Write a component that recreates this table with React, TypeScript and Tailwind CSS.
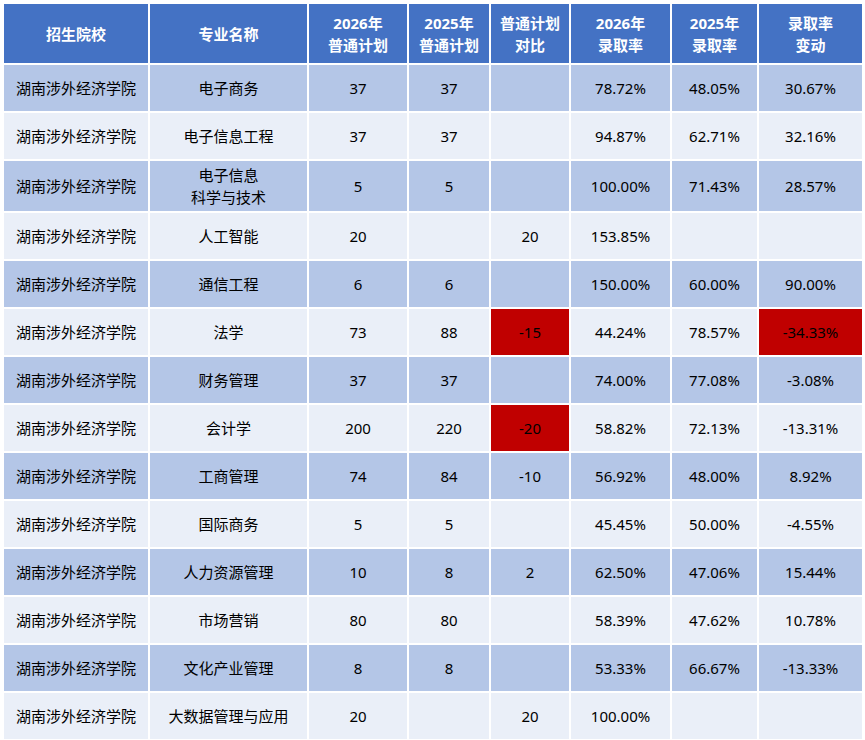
const headers = [
  ["招生院校"],
  ["专业名称"],
  ["2026年", "普通计划"],
  ["2025年", "普通计划"],
  ["普通计划", "对比"],
  ["2026年", "录取率"],
  ["2025年", "录取率"],
  ["录取率", "变动"],
];

type Row = {
  major: string[];
  p26: string;
  p25: string;
  diff: string;
  r26: string;
  r25: string;
  change: string;
  diffRed?: boolean;
  changeRed?: boolean;
};

const rows: Row[] = [
  { major: ["电子商务"], p26: "37", p25: "37", diff: "", r26: "78.72%", r25: "48.05%", change: "30.67%" },
  { major: ["电子信息工程"], p26: "37", p25: "37", diff: "", r26: "94.87%", r25: "62.71%", change: "32.16%" },
  { major: ["电子信息", "科学与技术"], p26: "5", p25: "5", diff: "", r26: "100.00%", r25: "71.43%", change: "28.57%" },
  { major: ["人工智能"], p26: "20", p25: "", diff: "20", r26: "153.85%", r25: "", change: "" },
  { major: ["通信工程"], p26: "6", p25: "6", diff: "", r26: "150.00%", r25: "60.00%", change: "90.00%" },
  { major: ["法学"], p26: "73", p25: "88", diff: "-15", r26: "44.24%", r25: "78.57%", change: "-34.33%", diffRed: true, changeRed: true },
  { major: ["财务管理"], p26: "37", p25: "37", diff: "", r26: "74.00%", r25: "77.08%", change: "-3.08%" },
  { major: ["会计学"], p26: "200", p25: "220", diff: "-20", r26: "58.82%", r25: "72.13%", change: "-13.31%", diffRed: true },
  { major: ["工商管理"], p26: "74", p25: "84", diff: "-10", r26: "56.92%", r25: "48.00%", change: "8.92%" },
  { major: ["国际商务"], p26: "5", p25: "5", diff: "", r26: "45.45%", r25: "50.00%", change: "-4.55%" },
  { major: ["人力资源管理"], p26: "10", p25: "8", diff: "2", r26: "62.50%", r25: "47.06%", change: "15.44%" },
  { major: ["市场营销"], p26: "80", p25: "80", diff: "", r26: "58.39%", r25: "47.62%", change: "10.78%" },
  { major: ["文化产业管理"], p26: "8", p25: "8", diff: "", r26: "53.33%", r25: "66.67%", change: "-13.33%" },
  { major: ["大数据管理与应用"], p26: "20", p25: "", diff: "20", r26: "100.00%", r25: "", change: "" },
];

function Cell({ lines, bg, tall }: { lines: string[]; bg: string; tall: boolean }) {
  return (
    <div
      className={`${bg} ${tall ? "h-[50px]" : "h-[46px]"} flex flex-col items-center justify-center text-center text-[15px] leading-[22px] text-black`}
    >
      {lines.map((l, i) => (
        <span key={i}>{l}</span>
      ))}
    </div>
  );
}

export default function App() {
  return (
    <div
      className="w-[865px] h-[740px] bg-white overflow-hidden pl-[4px] pt-[4px]"
      style={{ fontFamily: '"Noto Sans", "Noto Sans CJK SC", sans-serif' }}
    >
      <div className="grid grid-cols-[144px_157px_98px_80px_78px_99px_85px_103px] gap-[2px]">
        {headers.map((h, i) => (
          <div
            key={i}
            className="h-[59px] bg-[#4472c4] flex flex-col items-center justify-center text-center text-white font-bold text-[15px] leading-[22px]"
          >
            {h.map((l, j) => (
              <span key={j}>{l}</span>
            ))}
          </div>
        ))}

        {rows.map((r, i) => {
          const bg = i % 2 === 0 ? "bg-[#b4c6e7]" : "bg-[#eaeff8]";
          const tall = r.major.length > 1;
          return [
            <Cell key={`${i}-s`} lines={["湖南涉外经济学院"]} bg={bg} tall={tall} />,
            <Cell key={`${i}-m`} lines={r.major} bg={bg} tall={tall} />,
            <Cell key={`${i}-a`} lines={[r.p26]} bg={bg} tall={tall} />,
            <Cell key={`${i}-b`} lines={[r.p25]} bg={bg} tall={tall} />,
            <Cell key={`${i}-c`} lines={[r.diff]} bg={r.diffRed ? "bg-[#c00000]" : bg} tall={tall} />,
            <Cell key={`${i}-d`} lines={[r.r26]} bg={bg} tall={tall} />,
            <Cell key={`${i}-e`} lines={[r.r25]} bg={bg} tall={tall} />,
            <Cell key={`${i}-f`} lines={[r.change]} bg={r.changeRed ? "bg-[#c00000]" : bg} tall={tall} />,
          ];
        })}
      </div>
    </div>
  );
}
